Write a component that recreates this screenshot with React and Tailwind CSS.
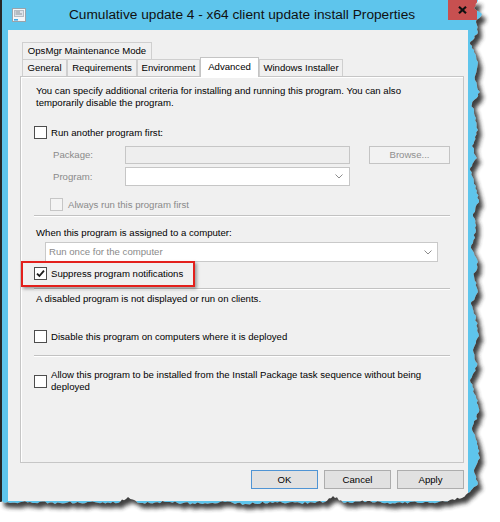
import React from "react";

function rng(seed) {
  let s = seed;
  return () => {
    s = (s * 1103515245 + 12345) % 2147483648;
    return s / 2147483648;
  };
}

function buildWindowPath() {
  const r = rng(11);
  const right = [
    [478, 0], [474, 8], [482, 14], [476, 22], [478, 32], [470, 44], [474, 52], [478, 62],
    [475, 80], [480, 92], [472, 104], [476, 118], [478, 130], [472, 146], [477, 158],
    [470, 170], [476, 186], [479, 200], [473, 214], [476, 230], [471, 248], [478, 262],
    [474, 276], [478, 292], [471, 304], [476, 318], [479, 336], [473, 350], [477, 366],
    [470, 380], [476, 396], [479, 412], [472, 428], [477, 444], [480, 458], [474, 470],
    [478, 484], [470, 492], [462, 498],
  ];
  const bottom = [
    [450, 500], [430, 503], [410, 502], [390, 504], [370, 501], [345, 503], [333, 496],
    [325, 502], [300, 503], [270, 502], [245, 504], [220, 502], [195, 504], [170, 502],
    [140, 503], [128, 497], [118, 503], [90, 502], [60, 503], [30, 502], [0, 502],
  ];
  const anchors = [...right, ...bottom];
  const pts = [[0, 0]];
  for (let i = 0; i < anchors.length - 1; i++) {
    const [x1, y1] = anchors[i];
    const [x2, y2] = anchors[i + 1];
    const d = Math.hypot(x2 - x1, y2 - y1);
    const n = Math.max(1, Math.round(d / 2.5));
    for (let k = 0; k < n; k++) {
      const t = k / n;
      const jitter = k === 0 ? 0 : (r() - 0.5) * 2.4;
      const x = x1 + (x2 - x1) * t;
      const y = y1 + (y2 - y1) * t;
      if (i < right.length - 1) pts.push([x + jitter, y]);
      else pts.push([x, y + jitter]);
    }
  }
  pts.push(anchors[anchors.length - 1]);
  return "M" + pts.map(([x, y]) => `${x.toFixed(1)} ${y.toFixed(1)}`).join(" L") + " Z";
}

const WIN_PATH = buildWindowPath();

function CheckBox({ checked, disabled }) {
  return (
    <div
      className={
        "w-[13px] h-[13px] shrink-0 border flex items-center justify-center " +
        (disabled ? "bg-[#f4f4f4] border-[#c6c6c6]" : "bg-white border-[#4d4d4d]")
      }
    >
      {checked && (
        <svg width="9" height="9" viewBox="0 0 9 9">
          <path d="M1 4.6 L3.4 7 L8 1.6" fill="none" stroke="#1a1a1a" strokeWidth="1.8" />
        </svg>
      )}
    </div>
  );
}

function Chevron() {
  return (
    <svg width="8" height="5" viewBox="0 0 8 5">
      <path d="M0.5 0.5 L4 4 L7.5 0.5" fill="none" stroke="#8c8c8c" strokeWidth="1" />
    </svg>
  );
}

function Separator({ className }) {
  return <div className={"w-[416px] h-[2px] border-t border-[#c2c2c2] border-b border-b-white " + className} />;
}

function Button({ children, primary }) {
  return (
    <div
      className={
        "w-[67px] h-[19px] bg-[#e1e1e1] border flex items-center justify-center text-black " +
        (primary ? "border-[#4f94d4]" : "border-[#adadad]")
      }
    >
      {children}
    </div>
  );
}

function Tab({ children, w, selected }) {
  return (
    <div
      className={
        "flex items-center justify-center border border-b-0 " +
        (selected
          ? "h-[20px] -mb-[1px] bg-white border-[#c4c4c4] relative z-10 pb-[2px]"
          : "h-[17px] bg-[#f0f0f0] border-[#cfcfcf]") +
        " " +
        w
      }
    >
      {children}
    </div>
  );
}

export default function App() {
  return (
    <div className="relative w-[500px] h-[522px] bg-white overflow-hidden font-['Liberation_Sans',Arial,sans-serif] text-[9.6px] leading-[12px] text-black">
      <div className="w-[482px] h-[512px] bg-[#5ec5ec] border-l-2 border-[#262626] flex flex-col">
        {/* Title bar */}
        <div className="h-[30px] grid grid-cols-[1fr_auto_1fr] items-center shrink-0">
          <div className="pl-[10px] flex items-center">
            <svg width="14" height="14" viewBox="0 0 14 14">
              <rect x="0.5" y="0.5" width="13" height="13" fill="#f4f6f8" stroke="#9aa3ab" />
              <rect x="2.5" y="2.5" width="9" height="6" fill="#dfe4ea" stroke="#b5bcc4" />
              <line x1="3.5" y1="4" x2="8" y2="4" stroke="#8a939b" />
              <line x1="3.5" y1="6" x2="10" y2="6" stroke="#8a939b" />
              <rect x="2" y="11" width="4" height="1.6" fill="#3ea8e6" />
            </svg>
          </div>
          <div className="text-[13.7px] leading-[16px] text-[#111] whitespace-nowrap">
            Cumulative update 4 - x64 client update install Properties
          </div>
          <div className="self-start justify-self-end mr-[5px] w-[29px] h-[20px] bg-[#c75050] flex items-center justify-center">
            <svg width="9" height="8" viewBox="0 0 9 8">
              <path d="M1 0.8 L8 7.2 M8 0.8 L1 7.2" stroke="#111" strokeWidth="2.2" />
            </svg>
          </div>
        </div>

        {/* Client area */}
        <div className="ml-[6px] w-[460px] h-[471px] bg-[#f0f0f0] pl-[12px] pr-[4px] pt-[12px] flex flex-col shrink-0">
          <div className="flex pl-[2px] h-[17px]">
            <Tab w="w-[130px]">OpsMgr Maintenance Mode</Tab>
          </div>
          <div className="flex pl-[2px] h-[17px] items-end">
            <Tab w="w-[45px]">General</Tab>
            <Tab w="w-[70px]">Requirements</Tab>
            <Tab w="w-[63px]">Environment</Tab>
            <Tab w="w-[59px]" selected>Advanced</Tab>
            <Tab w="w-[84px]">Windows Installer</Tab>
          </div>

          {/* Panel */}
          <div className="relative w-[444px] h-[387px] border border-[#c6c6c6] bg-[#f0f0f0] shadow-[inset_1px_1px_0_#ffffff] pl-[13px] pt-[8px] flex flex-col">
            <p className="ml-[2px] whitespace-nowrap">
              You can specify additional criteria for installing and running this program. You can also
              <br />
              temporarily disable the program.
            </p>

            <div className="mt-[17px] flex items-center h-[13px]">
              <CheckBox />
              <span className="ml-[4px]">Run another program first:</span>
            </div>

            <div className="mt-[7px] flex items-center h-[18px]">
              <span className="ml-[19px] w-[72px] text-[#8a8a8a]">Package:</span>
              <div className="w-[225px] h-[18px] bg-[#eeeeee] border border-[#c6c6c6]" />
              <div className="ml-[19px] w-[81px] h-[18px] bg-[#f2f2f2] border border-[#c4c4c4] flex items-center justify-center text-[#8f8f8f]">
                Browse...
              </div>
            </div>

            <div className="mt-[3px] flex items-center h-[19px]">
              <span className="ml-[19px] w-[72px] text-[#8a8a8a]">Program:</span>
              <div className="w-[225px] h-[19px] bg-white border border-[#c6c6c6] flex items-center justify-end pr-[6px]">
                <Chevron />
              </div>
            </div>

            <div className="mt-[12px] ml-[16px] flex items-center h-[13px]">
              <CheckBox disabled />
              <span className="ml-[5px] text-[#8a8a8a]">Always run this program first</span>
            </div>

            <Separator className="mt-[4px]" />

            <p className="mt-[10px] ml-[2px]">When this program is assigned to a computer:</p>

            <div className="mt-[3px] ml-[11px] w-[393px] h-[20px] bg-white border border-[#c9c9c9] flex items-center justify-between pl-[3px] pr-[5px]">
              <span className="text-[#8a8a8a]">Run once for the computer</span>
              <Chevron />
            </div>

            <div className="mt-[5px] flex items-center h-[13px]">
              <CheckBox checked />
              <span className="ml-[4px]">Suppress program notifications</span>
            </div>

            <Separator className="mt-[8px]" />

            <p className="mt-[3px] ml-[2px]">A disabled program is not displayed or run on clients.</p>

            <div className="mt-[25px] flex items-center h-[13px]">
              <CheckBox />
              <span className="ml-[4px]">Disable this program on computers where it is deployed</span>
            </div>

            <Separator className="mt-[12px]" />

            <div className="mt-[12px] flex items-center">
              <CheckBox />
              <span className="ml-[4px] whitespace-nowrap">
                Allow this program to be installed from the Install Package task sequence without being
                <br />
                deployed
              </span>
            </div>

            {/* red annotation */}
            <div className="absolute left-0 top-[184px] w-[174px] h-[26px] border-2 border-[#e3201c] shadow-[2px_2px_3px_rgba(0,0,0,0.35)]" />
          </div>

          <div className="mt-[7px] flex justify-end gap-[6px] h-[19px]">
            <Button primary>OK</Button>
            <Button>Cancel</Button>
            <Button>Apply</Button>
          </div>
        </div>
      </div>

      {/* torn edge overlay */}
      <svg className="absolute left-0 top-0 pointer-events-none" width="500" height="522">
        <defs>
          <clipPath id="outside">
            <path d={`M0 0H500V522H0Z ${WIN_PATH}`} clipRule="evenodd" />
          </clipPath>
          <filter id="blur" x="-5%" y="-5%" width="110%" height="110%">
            <feGaussianBlur stdDeviation="2" />
          </filter>
        </defs>
        <path d={`M0 0H500V522H0Z ${WIN_PATH}`} fill="#ffffff" fillRule="evenodd" />
        <g clipPath="url(#outside)">
          <path d={WIN_PATH} transform="translate(4 5)" fill="#2a2a2a" opacity="0.9" filter="url(#blur)" />
        </g>
      </svg>
    </div>
  );
}
